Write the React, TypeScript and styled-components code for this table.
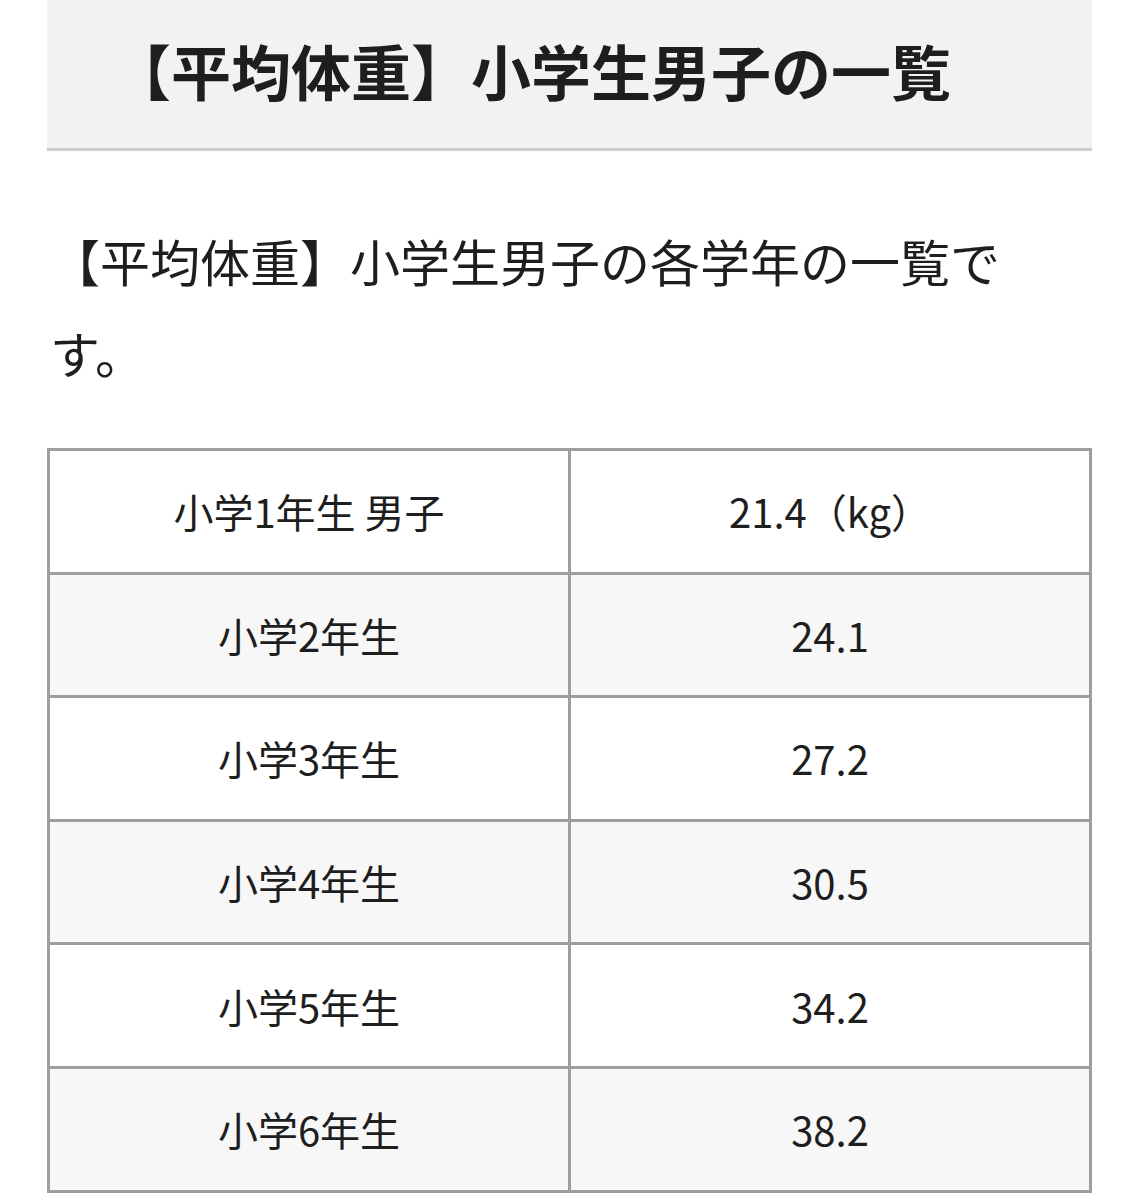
import React from "react";
import styled, { createGlobalStyle } from "styled-components";

const Global = createGlobalStyle`
  html, body { margin: 0; padding: 0; background: #fff; }
  body { font-family: "Noto Sans CJK JP", "Noto Sans", sans-serif; color: #222; }
`;

const Page = styled.div`
  padding: 0 47px 0 47px;
  width: 1045px;
`;

const Heading = styled.h2`
  margin: 0;
  background: #f2f2f2;
  border-bottom: 3px solid #cccccc;
  padding: 28px 0 36px 64px;
  font-size: 60px;
  line-height: 1.4;
  font-weight: 700;
  color: #1e1e1e;
`;

const Lead = styled.p`
  margin: 63px 0 50px 0;
  padding: 0 40px 0 3px;
  font-size: 50px;
  line-height: 1.84;
  color: #1e1e1e;
`;

const Table = styled.table`
  width: 100%;
  border-collapse: collapse;
  border: 3px solid #9e9e9e;
  table-layout: fixed;
`;

const Row = styled.tr<{ $shade: boolean }>`
  background: ${(p) => (p.$shade ? "#f7f7f7" : "#ffffff")};
`;

const Cell = styled.td`
  border: 3px solid #9e9e9e;
  height: 120.6px;
  padding: 0;
  text-align: center;
  vertical-align: middle;
  font-size: 40px;
  color: #1e1e1e;
`;

const rows: [string, string][] = [
  ["小学1年生 男子", "21.4（kg）"],
  ["小学2年生", "24.1"],
  ["小学3年生", "27.2"],
  ["小学4年生", "30.5"],
  ["小学5年生", "34.2"],
  ["小学6年生", "38.2"],
];

export default function App() {
  return (
    <>
      <Global />
      <Page>
        <Heading>【平均体重】小学生男子の一覧</Heading>
        <Lead>【平均体重】小学生男子の各学年の一覧です。</Lead>
        <Table>
          <tbody>
            {rows.map(([a, b], i) => (
              <Row key={a} $shade={i % 2 === 1}>
                <Cell>{a}</Cell>
                <Cell>{b}</Cell>
              </Row>
            ))}
          </tbody>
        </Table>
      </Page>
    </>
  );
}
